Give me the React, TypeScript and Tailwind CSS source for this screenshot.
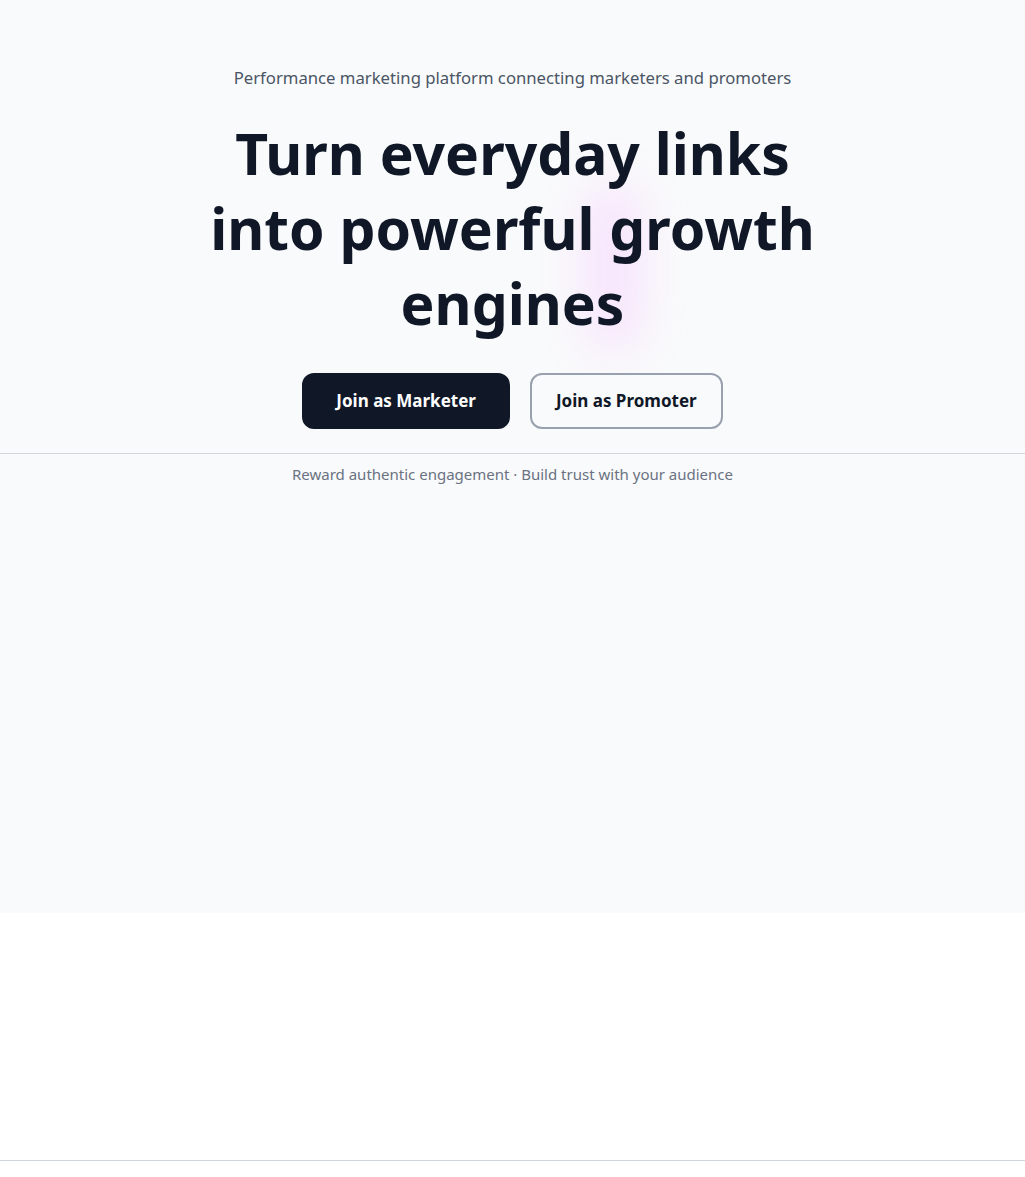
export default function App() {
  return (
    <div className="min-h-screen bg-white" style={{ fontFamily: '"Noto Sans", "Open Sans", sans-serif' }}>
      <section className="relative h-[913px] bg-gray-50 overflow-hidden">
        <div className="pointer-events-none absolute left-[588px] top-[185px] h-[165px] w-[50px] rounded-full bg-fuchsia-200 opacity-60 blur-xl" />
        <div className="relative flex flex-col items-center pt-16 text-center">
          <p className="text-[16.7px] leading-7 text-gray-600">
            Performance marketing platform connecting marketers and promoters
          </p>
          <h1 className="mt-6 max-w-2xl text-[57px] font-bold leading-[75px] text-gray-900">
            Turn everyday links into powerful growth engines
          </h1>
          <div className="mt-8 flex gap-5">
            <button className="rounded-xl border-2 border-gray-900 bg-gray-900 px-8 py-3 text-[17px] leading-7 font-bold text-white">
              Join as Marketer
            </button>
            <button className="rounded-xl border-2 border-gray-400 bg-gray-50 px-6 py-3 text-[17px] leading-7 font-bold text-gray-900">
              Join as Promoter
            </button>
          </div>
        </div>
        <div className="relative mt-6 border-t border-gray-300 pt-2 text-center">
          <p className="text-[15px] leading-6 text-gray-500">
            Reward authentic engagement · Build trust with your audience
          </p>
        </div>
      </section>
      <div className="h-[247px]" />
      <div className="border-t border-gray-300" />
    </div>
  );
}
